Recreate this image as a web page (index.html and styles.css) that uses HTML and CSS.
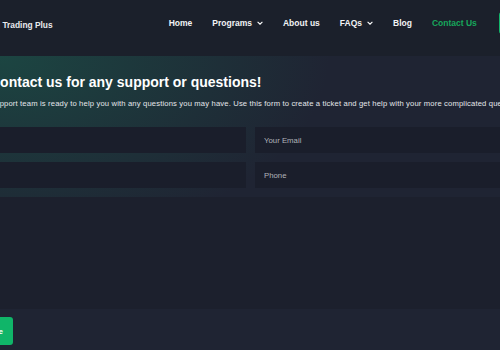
FILE: index.html
```html
<!DOCTYPE html>
<html lang="en">
<head>
<meta charset="UTF-8"/>
<meta name="viewport" content="width=device-width, initial-scale=1.0"/>
<title>Contact Us - Global Trading Plus</title>
<link rel="stylesheet" href="styles.css">
</head>
<body>

<header class="top-bar">
  <a class="logo" href="#">Global Trading Plus</a>
  <nav class="nav">
    <a href="#">Home</a>
    <a href="#" class="has-sub">Programs
      <svg viewBox="0 0 10 6" width="6" height="4"><path d="M1 1l4 4 4-4" fill="none" stroke="#fff" stroke-width="1.8"/></svg>
    </a>
    <a href="#">About us</a>
    <a href="#" class="has-sub">FAQs
      <svg viewBox="0 0 10 6" width="6" height="4"><path d="M1 1l4 4 4-4" fill="none" stroke="#fff" stroke-width="1.8"/></svg>
    </a>
    <a href="#">Blog</a>
    <a href="#" class="active">Contact Us</a>
    <a href="#" class="btn-top">Get Funded</a>
  </nav>
</header>

<section class="hero">
  <div class="wrap">
    <h1>Contact us for any support or questions!</h1>
    <p class="lead">Support team is ready to help you with any questions you may have. Use this form to create a ticket and get help with your more complicated questions.</p>

    <form class="ticket-form" onsubmit="return false">
      <div class="row">
        <input type="text" aria-label="Your Name">
        <input type="email" placeholder="Your Email">
      </div>
      <div class="row">
        <input type="text" aria-label="Subject">
        <input type="tel" placeholder="Phone">
      </div>
      <textarea aria-label="Message"></textarea>
      <button type="submit" class="btn-send">Create</button>
    </form>
  </div>
</section>

</body>
</html>
```

FILE: styles.css
```css
html, body {
  margin: 0; padding: 0;
  overflow: hidden;
  height: 100%;
}
body {
  background: #1f2433; color: #fff;
  font-family: "Liberation Sans", Arial, sans-serif;
}
a { text-decoration: none; color: inherit; }

.top-bar {
  height: 56px;
  background: #1b202b;
  display: flex; align-items: center;
  white-space: nowrap;
  padding-bottom: 10px;
  box-sizing: border-box;
}
.logo {
  margin-left: -26px; margin-top: 4px;
  font-size: 8.4px; font-weight: bold; color: #e9eaee;
}
.nav {
  display: flex; align-items: center; gap: 20px;
  margin-left: 116px;
  font-size: 8.5px; font-weight: bold;
}
.nav a { color: #f2f3f5; display: flex; align-items: center; gap: 5px; }
.nav a.active { color: #17a75c; }
.btn-top {
  margin-left: 2px;
  background: #12b56a; color: #fff !important;
  padding: 6px 12px; border-radius: 3px;
}

.hero {
  background:
    radial-gradient(ellipse 330px 190px at 0 0, rgba(24, 110, 84, 0.45), rgba(24, 110, 84, 0) 100%),
    #1f2433;
  height: calc(100% - 56px);
}
.wrap {
  margin-left: -10px;
  width: 522px;
  padding-top: 18px;
}
h1 {
  margin: 0 0 7px;
  font-size: 14px; line-height: 17px; font-weight: bold;
  color: #fff;
  white-space: nowrap;
}
.lead {
  margin: 0 0 18px;
  font-size: 7.65px; line-height: 11px;
  letter-spacing: 0.15px;
  color: #e4e6ea;
  white-space: nowrap;
}
.ticket-form { display: flex; flex-direction: column; gap: 9px; }
.row { display: grid; grid-template-columns: 256px 256px; gap: 9px; }
input, textarea {
  font-family: inherit;
  background: #1a1e2b; color: #fff;
  border: none; outline: none;
  height: 26px; box-sizing: border-box;
  padding: 0 9px;
  font-size: 7.8px;
}
input::placeholder { color: #b0b3b9; }
textarea { height: 112px; resize: none; background: #1c202d; }
.btn-send {
  align-self: flex-start;
  margin-left: -22px;
  margin-top: -1px;
  background: #10b569; color: #fff;
  border: none; border-radius: 3px;
  font-family: inherit; font-weight: bold; font-size: 8px;
  height: 28px; padding: 0 10px;
}
```
